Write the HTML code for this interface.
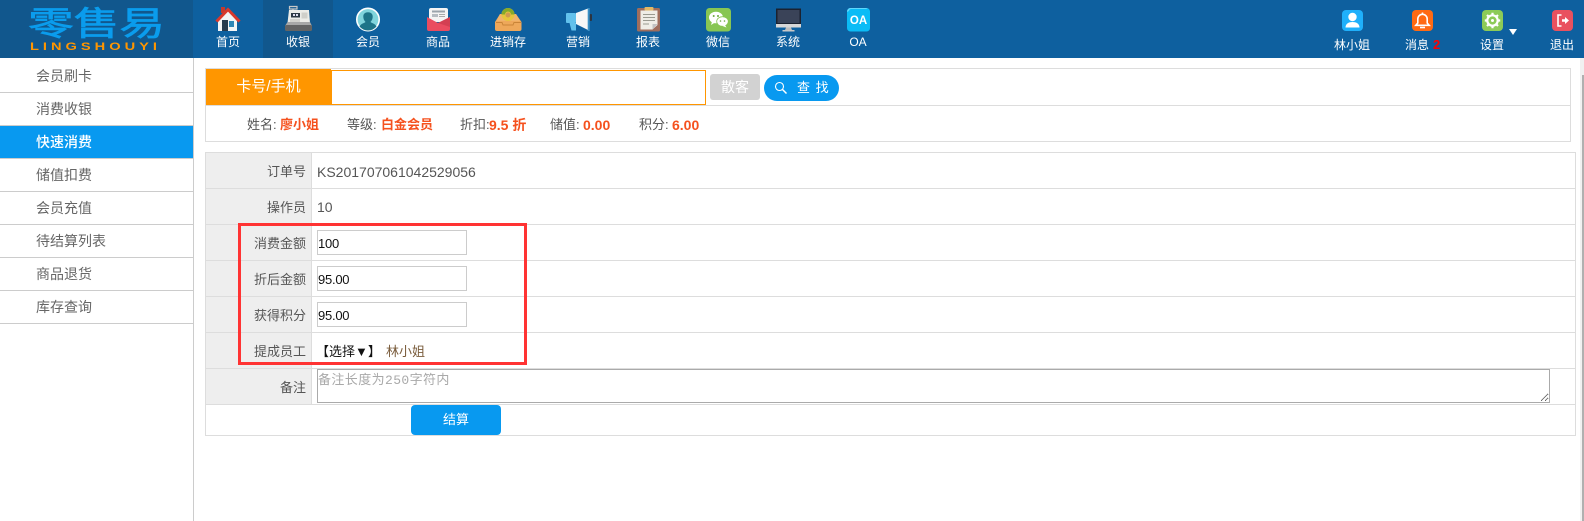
<!DOCTYPE html>
<html lang="zh-CN">
<head>
<meta charset="utf-8">
<title>快速消费</title>
<style>
html,body{margin:0;padding:0;width:1584px;height:521px;overflow:hidden;background:#fff}
body{position:relative;font-family:"Liberation Sans","Noto Sans CJK SC",sans-serif;color:#555}
div,span,a,svg,input,textarea{position:absolute;box-sizing:border-box}
.head{left:0;top:0;width:1584px;height:58px;background:#0e609f}
.logo{left:0;top:0;width:193px;height:58px;background:#11578d}
.act{left:263px;top:0;width:70px;height:58px;background:#11578d}
.nav{top:34px;width:70px;height:16px;line-height:16px;text-align:center;color:#fff;font-size:12px;white-space:nowrap}
.rt{top:37px;height:16px;line-height:16px;color:#fff;font-size:12px;white-space:nowrap}
.side{left:0;top:58px;width:194px;height:463px;border-right:1px solid #ccc}
.si{left:0;width:193px;height:33px;line-height:33px;padding-left:36px;font-size:14px;color:#666;border-bottom:1px solid #ccc}
.si.on{background:#0899f0;color:#fff;font-weight:500;border-bottom-color:#ccc}
.line{background:#ddd}
.lab{left:206px;width:106px;height:35px;line-height:37px;background:#eee;text-align:right;padding-right:6px;font-size:13px;color:#555}
.val{left:317px;height:20px;line-height:20px;font-size:14px;color:#555;white-space:nowrap}
input{left:317px;width:150px;height:25px;border:1px solid #ccc;padding:2px 0 0 0;margin:0;font:13px "Liberation Sans",sans-serif;letter-spacing:-.25px;color:#111;background:#fff;outline:0}
.i{top:116px;height:18px;line-height:18px;font-size:13px;color:#555;white-space:nowrap}
.o{top:116px;height:18px;line-height:18px;font-size:14px;color:#f5511e;font-weight:bold;white-space:nowrap}
.o13{font-size:13px}
textarea{left:317px;top:369px;width:1233px;height:34px;border:1px solid #aaa;padding:3px 1px 2px 0;margin:0;font:13px/16px "Liberation Mono","Noto Sans CJK SC",monospace;letter-spacing:.4px;outline:0;resize:both}
textarea::placeholder{color:#a9a9a9;opacity:1}
</style>
</head>
<body>
<div class="head"></div>
<div class="logo"></div>
<div class="act"></div>
<svg style="left:0;top:0" width="193" height="58" viewBox="0 0 193 58">
<text x="28" y="35" font-family="'Noto Sans CJK SC',sans-serif" font-size="33" fill="#0a9ced" stroke="#0a9ced" stroke-width=".7" textLength="137" lengthAdjust="spacingAndGlyphs">零售易</text>
<text x="30" y="50" font-family="'Liberation Sans',sans-serif" font-size="11" font-weight="bold" letter-spacing="3" fill="#ff9600" textLength="131" lengthAdjust="spacingAndGlyphs">LINGSHOUYI</text>
</svg>

<svg style="left:0;top:0" width="1584" height="58" viewBox="0 0 1584 58">
<!-- home -->
<g transform="translate(214 6)">
<rect x="7" y="1" width="4" height="6" fill="#c4392d"/>
<polygon points="4,15 14,5 23,15 23,25 4,25" fill="#f3f4f5"/>
<polyline points="2.500,15.500 14,3.500 25.500,15.500" fill="none" stroke="#d9382c" stroke-width="3"/>
<rect x="8" y="14" width="6" height="11" fill="#263a4d"/>
<rect x="15" y="15" width="5" height="6" fill="#2f86b5"/>
</g>
<!-- register -->
<g transform="translate(284 6)">
<path d="M5.500 .5H13V3H5.500ZM9 3V5" fill="none" stroke="#c8c8c8" stroke-width="1.200"/>
<polygon points="5,4 25,4 26,17 3.500,17" fill="#ecece8"/>
<rect x="7" y="7" width="9" height="4.500" fill="#2c3843"/>
<rect x="9" y="8" width="2" height="2" fill="#dde"/><rect x="12" y="8" width="2" height="2" fill="#dde"/>
<rect x="17.500" y="6.500" width="6" height="6" fill="#cfcfca"/>
<rect x="6" y="13" width="10" height="3" fill="#d2d2ce"/>
<polygon points="3.500,16 26,16 28,20 1,20" fill="#a8a8a8"/>
<rect x="1" y="19" width="27" height="6" rx="1.500" fill="#646464"/>
</g>
<!-- member -->
<g transform="translate(354 6)">
<circle cx="14" cy="13.500" r="11.200" fill="#80d4dc" stroke="#fff" stroke-width="1.600"/>
<path d="M5.500 20.500C7 17.500 10.500 17 11.500 16C10 14.500 9.300 12.500 9.300 10.500C9.300 7.800 11.300 6.300 14 6.300S18.700 7.800 18.700 10.500C18.700 12.500 18 14.500 16.500 16C17.500 17 21 17.500 22.500 20.500A11 11 0 0 1 5.500 20.500Z" fill="#1d7488"/>
</g>
<!-- goods -->
<g transform="translate(424 6)">
<rect x="5" y="2" width="19" height="14" rx="2" fill="#f4f4f4"/>
<rect x="8" y="4.500" width="13" height="2" fill="#9aa3ab"/>
<rect x="8" y="8" width="6" height="3" fill="#b5bcc2"/><rect x="15" y="8" width="6" height="1" fill="#aaa"/><rect x="15" y="10" width="6" height="1" fill="#aaa"/>
<path d="M3 11L14 17L26 11V23A2 2 0 0 1 24 25H5A2 2 0 0 1 3 23Z" fill="#ea4c60"/>
<path d="M14 17L26 11V21Z" fill="#d33f52"/>
</g>
<!-- inventory -->
<g transform="translate(494 6)">
<path d="M6 8H22L27.500 16V23A2 2 0 0 1 25.500 25H3A2 2 0 0 1 1 23V16Z" fill="#eea85a"/>
<path d="M6 8H22L26 15H2.500Z" fill="#f0b36c"/>
<path d="M2 16.500H8L9 19H19L20 16.500H27" fill="none" stroke="#c98438" stroke-width="1"/>
<circle cx="14" cy="8.500" r="6.500" fill="#e6c53c"/>
<path d="M7.500 8.500A6.500 6.500 0 0 1 20.500 8.500L17 8.500A3 3 0 0 0 11 8.500Z" fill="#86a92b"/>
<circle cx="14" cy="9" r="2.500" fill="#cf9a50"/>
</g>
<!-- marketing -->
<g transform="translate(564 6)">
<rect x="25.500" y="8" width="2.500" height="7" rx="1" fill="#2c3440"/>
<polygon points="12,7 24,2.500 24,24 12,18" fill="#f7f7f7"/>
<rect x="23.700" y="2" width="2" height="23" fill="#3a90c5"/>
<rect x="2" y="7" width="10" height="10" rx="1" fill="#62c1ec"/>
<path d="M5.500 17H12V24.500H7.500Z" fill="#62c1ec"/>
</g>
<!-- report -->
<g transform="translate(636 6)">
<rect x="1" y="2" width="23" height="23.500" rx="1.500" fill="#9f6d5c"/>
<path d="M4.500 4.500H21.500V19L16.500 23.500H4.500Z" fill="#efede6"/>
<path d="M16.500 23.500L21.500 18H16.500Z" fill="#c2c2c2"/>
<rect x="8.500" y="1" width="9" height="3.500" rx="1" fill="#e2b866"/>
<path d="M7 8.500H19M7 11.500H19M7 14.500H19M7 18H13" stroke="#9a9a90" stroke-width="1"/>
</g>
<!-- wechat -->
<g transform="translate(704 6)">
<rect x="2" y="2" width="25" height="23.500" rx="3.500" fill="#88c653"/>
<ellipse cx="12" cy="11.500" rx="7" ry="5.800" fill="#fff"/>
<polygon points="8,15.500 7,19 11,16.500" fill="#fff"/>
<ellipse cx="18.500" cy="15.500" rx="5.800" ry="4.800" fill="#fff" stroke="#88c653" stroke-width=".8"/>
<polygon points="21,19 22.500,21.500 18.500,20" fill="#fff"/>
<circle cx="9.700" cy="10" r="1" fill="#6aa83c"/><circle cx="14" cy="10" r="1" fill="#6aa83c"/>
<circle cx="16.500" cy="15" r=".8" fill="#6aa83c"/><circle cx="20.500" cy="15" r=".8" fill="#6aa83c"/>
</g>
<!-- system -->
<g transform="translate(774 6)">
<rect x="2" y="2.500" width="25" height="16" fill="#1b2230"/>
<rect x="3.500" y="4" width="22" height="13" fill="#3a4358"/>
<rect x="2" y="18" width="25" height="3.500" fill="#d7d7d7"/>
<polygon points="12,21.500 17,21.500 18,24 11,24" fill="#bdbdbd"/>
<rect x="8.500" y="24" width="12" height="1.500" fill="#c8c8c8"/>
</g>
<!-- OA -->
<g transform="translate(844 6)">
<rect x="3" y="2" width="23" height="23.500" rx="3.500" fill="#0bbcf6"/>
<path d="M3 6A3.500 3.500 0 0 1 6.500 2H22L24 3H7A2.500 2.500 0 0 0 5 5Z" fill="#5fd6fb"/>
<text x="14.500" y="18" text-anchor="middle" font-family="'Liberation Sans',sans-serif" font-size="11.500" font-weight="bold" fill="#fff">OA</text>
</g>
<!-- user -->
<g transform="translate(1342 10)">
<rect width="21" height="21" rx="4" fill="#1fb0fb"/>
<circle cx="10.500" cy="7" r="4.200" fill="#fff"/>
<path d="M3.500 17.500C3.500 13.500 7 12 10.500 12S17.500 13.500 17.500 17.500Z" fill="#fff"/>
</g>
<!-- bell -->
<g transform="translate(1412 10)">
<rect width="21" height="21" rx="4" fill="#ff6a13"/>
<path d="M5.800 13V9A4.700 4.700 0 0 1 15.200 9V13L17.200 15.300H3.800Z" fill="none" stroke="#fff" stroke-width="1.600"/>
<path d="M8 17.500H13" stroke="#fff" stroke-width="1.600"/>
<rect x="9.700" y="2.500" width="1.600" height="2" fill="#fff"/>
</g>
<!-- gear -->
<g transform="translate(1482 10)">
<rect width="21" height="21" rx="4" fill="#8ccb57"/>
<circle cx="10.500" cy="10.500" r="5.200" fill="none" stroke="#fff" stroke-width="2.200"/>
<circle cx="10.500" cy="10.500" r="1.500" fill="#fff"/>
<path d="M10.500 2.800V5.500M10.500 15.500V18.200M2.800 10.500H5.500M15.500 10.500H18.200M5 5L7 7M14 14L16 16M16 5L14 7M7 14L5 16" stroke="#fff" stroke-width="2.200"/>
</g>
<polygon points="1509,29 1517,29 1513,35" fill="#fff"/>
<!-- exit -->
<g transform="translate(1552 10)">
<rect width="21" height="21" rx="4" fill="#e9515f"/>
<path d="M9.500 5H6V16H9.500" fill="none" stroke="#fff" stroke-width="1.600"/>
<path d="M10 9.300H13V7L17 10.500L13 14V11.700H10Z" fill="#fff"/>
</g>
</svg>

<div class="nav" style="left:193px">首页</div>
<div class="nav" style="left:263px">收银</div>
<div class="nav" style="left:333px">会员</div>
<div class="nav" style="left:403px">商品</div>
<div class="nav" style="left:473px">进销存</div>
<div class="nav" style="left:543px">营销</div>
<div class="nav" style="left:613px">报表</div>
<div class="nav" style="left:683px">微信</div>
<div class="nav" style="left:753px">系统</div>
<div class="nav" style="left:823px">OA</div>

<div class="rt" style="left:1334px">林小姐</div>
<div class="rt" style="left:1405px">消息</div>
<div class="rt" style="left:1433px;color:#f00;font-weight:bold;font-size:13px">2</div>
<div class="rt" style="left:1480px">设置</div>
<div class="rt" style="left:1550px">退出</div>

<div class="side">
<div class="si" style="top:2px">会员刷卡</div>
<div class="si" style="top:35px">消费收银</div>
<div class="si on" style="top:68px">快速消费</div>
<div class="si" style="top:101px">储值扣费</div>
<div class="si" style="top:134px">会员充值</div>
<div class="si" style="top:167px">待结算列表</div>
<div class="si" style="top:200px">商品退货</div>
<div class="si" style="top:233px">库存查询</div>
</div>

<!-- scrollbar -->
<div style="left:1580px;top:58px;width:4px;height:463px;background:#f1f1f1"></div>
<div style="left:1582px;top:75px;width:2px;height:446px;background:#b0b0b0"></div>

<!-- search box -->
<div style="left:205px;top:68px;width:1366px;height:74px;border:1px solid #ddd"></div>
<div class="line" style="left:206px;top:105px;width:1364px;height:1px"></div>
<div style="left:206px;top:69px;width:125px;height:36px;line-height:36px;background:#ff9600;color:#fff;font-size:15px;text-align:center">卡号/手机</div>
<div style="left:331px;top:70px;width:375px;height:35px;border:1px solid #ff9600;background:#fff"></div>
<div style="left:710px;top:74px;width:50px;height:26px;line-height:26px;background:#d2d2d2;border-radius:3px;color:#fff;font-size:14px;text-align:center">散客</div>
<div style="left:764px;top:75px;width:75px;height:26px;border-radius:13px;background:#0899f0"></div>
<svg style="left:774px;top:81px" width="14" height="14" viewBox="0 0 14 14"><circle cx="5.500" cy="5.500" r="4" fill="none" stroke="#fff" stroke-width="1.100"/><path d="M8.500 8.500L12.500 12.500" stroke="#fff" stroke-width="1.500"/></svg>
<div style="left:797px;top:79px;height:18px;line-height:18px;color:#fff;font-size:13px;word-spacing:2px;white-space:nowrap">查 找</div>

<div class="i" style="left:247px">姓名:</div><div class="o o13" style="left:280px">廖小姐</div>
<div class="i" style="left:347px">等级:</div><div class="o o13" style="left:381px">白金会员</div>
<div class="i" style="left:460px">折扣:</div><div class="o" style="left:489px">9.5 折</div>
<div class="i" style="left:550px">储值:</div><div class="o" style="left:583px">0.00</div>
<div class="i" style="left:639px">积分:</div><div class="o" style="left:672px">6.00</div>

<!-- form table -->
<div style="left:205px;top:152px;width:1371px;height:284px;border:1px solid #ddd"></div>
<div class="lab" style="top:153px">订单号</div>
<div class="lab" style="top:189px">操作员</div>
<div class="lab" style="top:225px">消费金额</div>
<div class="lab" style="top:261px">折后金额</div>
<div class="lab" style="top:297px">获得积分</div>
<div class="lab" style="top:333px">提成员工</div>
<div class="lab" style="top:369px">备注</div>
<div class="line" style="left:206px;top:188px;width:1369px;height:1px"></div>
<div class="line" style="left:206px;top:224px;width:1369px;height:1px"></div>
<div class="line" style="left:206px;top:260px;width:1369px;height:1px"></div>
<div class="line" style="left:206px;top:296px;width:1369px;height:1px"></div>
<div class="line" style="left:206px;top:332px;width:1369px;height:1px"></div>
<div class="line" style="left:206px;top:368px;width:1369px;height:1px"></div>
<div class="line" style="left:206px;top:404px;width:1369px;height:1px"></div>
<div class="line" style="left:311px;top:153px;width:1px;height:251px"></div>

<div class="val" style="top:162px">KS201707061042529056</div>
<div class="val" style="top:197px">10</div>
<input style="top:230px" value="100">
<input style="top:266px" value="95.00">
<input style="top:302px" value="95.00">
<div style="left:316px;top:343px;height:18px;line-height:18px;font-size:13px;color:#111;white-space:nowrap">【选择▼】</div>
<div style="left:386px;top:343px;height:18px;line-height:18px;font-size:13px;color:#7a5c3c;white-space:nowrap">林小姐</div>
<textarea placeholder="备注长度为250字符内"></textarea>
<div style="left:411px;top:405px;width:90px;height:30px;line-height:30px;background:#0899f0;border-radius:4px;color:#fff;font-size:13px;text-align:center">结算</div>

<!-- red highlight -->
<div style="left:238px;top:223px;width:289px;height:142px;border:3px solid #f33"></div>
</body>
</html>
